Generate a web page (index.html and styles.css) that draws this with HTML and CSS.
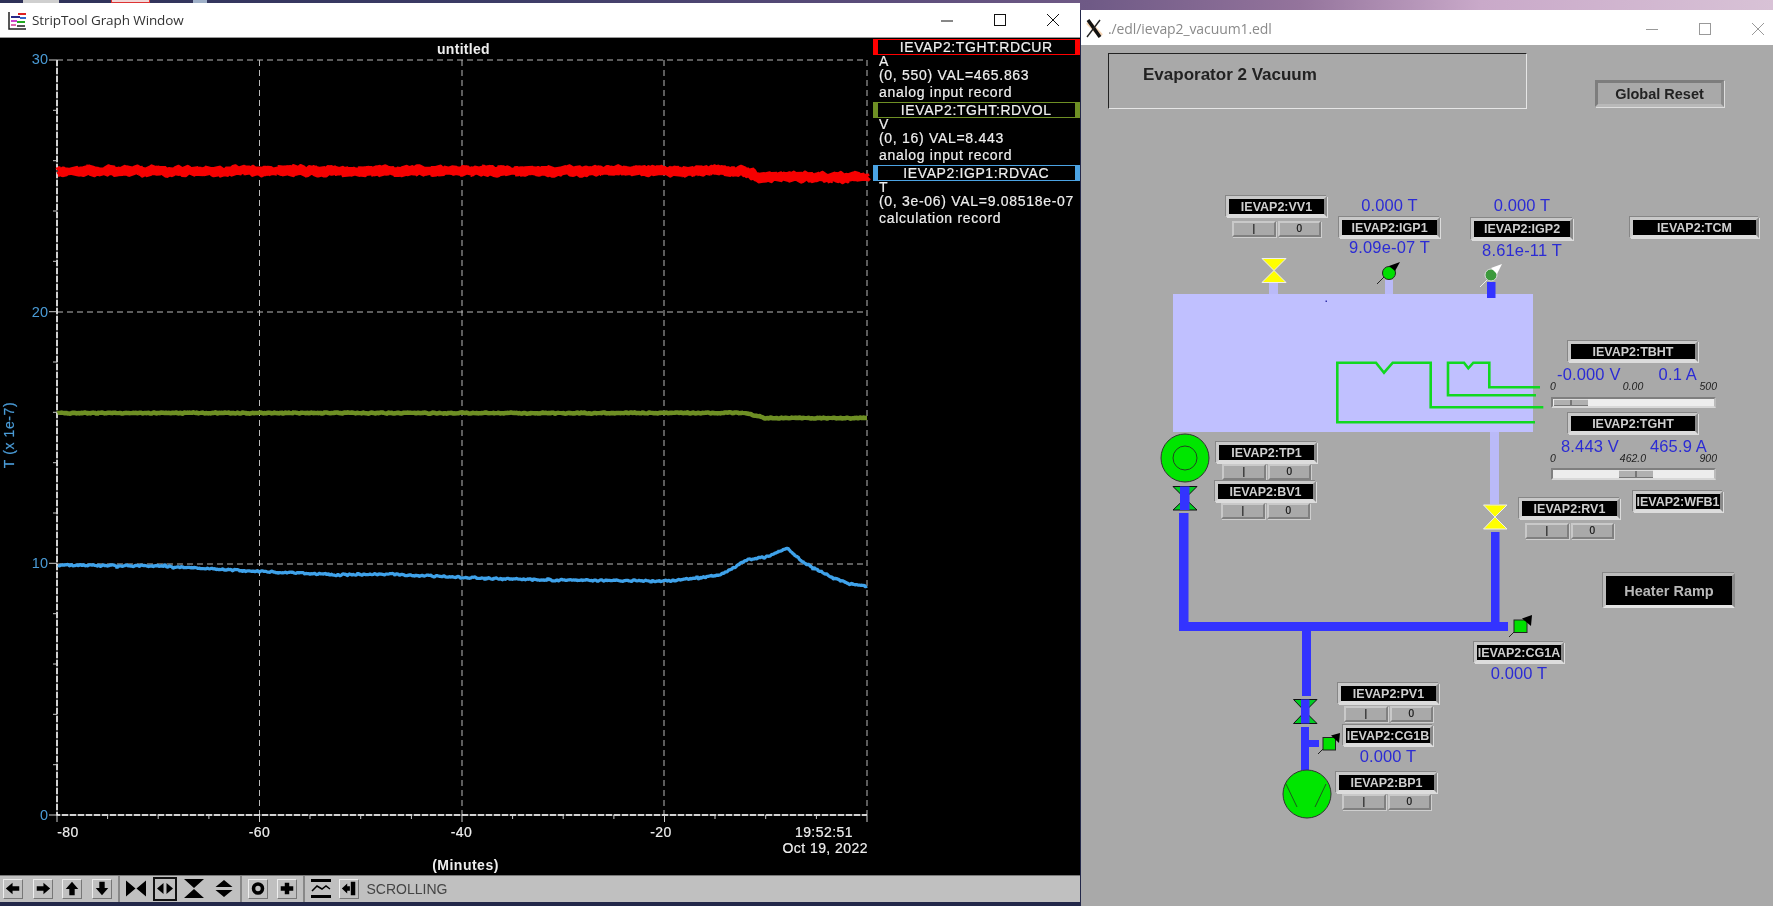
FILE: index.html
```html
<!DOCTYPE html>
<html lang="en">
<head>
<meta charset="utf-8">
<title>StripTool and EDM</title>
<link rel="stylesheet" href="styles.css">
</head>
<body>
<div class="desktop">
  <span class="chip chip-a"></span><span class="chip chip-b"></span><span class="chip chip-c"></span>

  <section class="win win-strip">
    <header class="titlebar strip-title">
      <svg class="appicon" viewBox="0 0 18 18"><rect width="18" height="18" fill="#fff"/><path d="M1 0V17H18" fill="none" stroke="#222" stroke-width="1.500"/><path d="M10 2H18" stroke="#d22" stroke-width="2"/><path d="M3 5H12" stroke="#2a2a8a" stroke-width="2"/><path d="M12 6H18" stroke="#36c" stroke-width="2"/><path d="M3 9H9" stroke="#c4c" stroke-width="2"/><path d="M9 10H17" stroke="#2a2" stroke-width="2"/><path d="M3 13H8" stroke="#d6a" stroke-width="2"/><path d="M9 14H17" stroke="#555" stroke-width="2"/></svg>
      <span class="wintext">StripTool Graph Window</span>
      <div class="controls">
        <svg viewBox="0 0 12 12"><path d="M0 7H12" stroke="#111"/></svg>
        <svg viewBox="0 0 12 12"><rect x=".5" y=".5" width="11" height="11" fill="none" stroke="#111"/></svg>
        <svg viewBox="0 0 12 12"><path d="M0 0L12 12M12 0L0 12" stroke="#111"/></svg>
      </div>
    </header>
    <div class="strip-main">
      <svg class="plot" viewBox="0 38 873 837">
        <g class="grid">
          <path d="M259.500 60V815M462 60V815M664 60V815M867 60V815"/>
          <path d="M57 60H867M57 312H867M57 564H867"/>
        </g>
        <path class="axis-base" d="M57 60V815H867"/>
        <path class="axis-dash" d="M57 60V815H867"/>
        <path class="ticks" d="M49 60H57M53 110.300H57M53 160.700H57M53 211H57M53 261.300H57M49 311.700H57M53 362H57M53 412.300H57M53 462.700H57M53 513H57M49 563.300H57M53 613.700H57M53 664H57M53 714.300H57M53 764.700H57M49 815H57"/>
        <path class="ticks" d="M57 815V822M107.600 815V819M158.200 815V819M208.900 815V819M259.500 815V822M310 815V819M360.700 815V819M411.400 815V819M462 815V822M512.600 815V819M563.200 815V819M613.900 815V819M664.500 815V822M715 815V819M765.700 815V819M816.400 815V819M867 815V822"/>
        <polyline id="trace-red" class="trace trace-red"/>
        <polyline id="trace-olive" class="trace trace-olive"/>
        <polyline id="trace-blue" class="trace trace-blue"/>
        <text class="ylab" x="48" y="64">30</text>
        <text class="ylab" x="48" y="317">20</text>
        <text class="ylab" x="48" y="568">10</text>
        <text class="ylab" x="48" y="820">0</text>
        <text class="ytitle" transform="translate(14 435) rotate(-90)">T (x 1e-7)</text>
        <text class="title-u" x="463.500" y="54">untitled</text>
        <text class="xlab" x="68" y="837">-80</text>
        <text class="xlab" x="259.500" y="837">-60</text>
        <text class="xlab" x="461.500" y="837">-40</text>
        <text class="xlab" x="661" y="837">-20</text>
        <text class="xlab xlab-end" x="853" y="837">19:52:51</text>
        <text class="xlab xlab-end" x="868" y="853">Oct 19, 2022</text>
        <text class="xtitle" x="465.500" y="870">(Minutes)</text>
      </svg>
      <aside class="legend">
        <div class="lg-name lg-red">IEVAP2:TGHT:RDCUR</div>
        <div class="lg-unit">A</div>
        <div class="lg-range">(0, 550) VAL=465.863</div>
        <div class="lg-type">analog input record</div>
        <div class="lg-name lg-olive">IEVAP2:TGHT:RDVOL</div>
        <div class="lg-unit">V</div>
        <div class="lg-range">(0, 16) VAL=8.443</div>
        <div class="lg-type">analog input record</div>
        <div class="lg-name lg-blue">IEVAP2:IGP1:RDVAC</div>
        <div class="lg-unit">T</div>
        <div class="lg-range">(0, 3e-06) VAL=9.08518e-07</div>
        <div class="lg-type">calculation record</div>
      </aside>
    </div>
    <footer class="toolbar">
      <div class="tgroup g1">
        <span class="tb"><svg viewBox="0 0 20 19"><path d="M2 9.500L9.500 3V7H17V12H9.500V16Z"/></svg></span>
        <span class="tb"><svg viewBox="0 0 20 19"><path d="M18 9.500L10.500 3V7H3V12H10.500V16Z"/></svg></span>
        <span class="tb"><svg viewBox="0 0 20 19"><path d="M10 2L17 10H13V17H7V10H3Z"/></svg></span>
        <span class="tb"><svg viewBox="0 0 20 19"><path d="M10 17L17 9H13V2H7V9H3Z"/></svg></span>
      </div>
      <i class="tsep"></i>
      <div class="tgroup g2">
        <span class="tb flat"><svg viewBox="0 0 21 19"><path d="M0 1L10 9.500L0 18ZM21 1L11 9.500L21 18Z"/></svg></span>
        <span class="tb sel"><svg viewBox="0 0 18 13"><path d="M7.500 1L1 6.500L7.500 12ZM10.500 1L17 6.500L10.500 12Z"/></svg></span>
        <span class="tb flat"><svg viewBox="0 0 20 19"><path d="M0 0H20L10 9ZM0 19H20L10 10Z"/></svg></span>
        <span class="tb flat last"><svg viewBox="0 0 19 19"><path d="M9.500 1L18 8H1ZM1 11H18L9.500 18Z"/></svg></span>
      </div>
      <i class="tsep"></i>
      <div class="tgroup g3">
        <span class="tb"><svg viewBox="0 0 20 19"><circle cx="10" cy="9.500" r="5" fill="none" stroke="#000" stroke-width="4"/></svg></span>
        <span class="tb"><svg viewBox="0 0 20 19"><path d="M7.500 3H12.500V7H17V12H12.500V16H7.500V12H3V7H7.500Z"/></svg></span>
      </div>
      <i class="tsep"></i>
      <div class="tgroup g4">
        <span class="tb flat"><svg viewBox="0 0 20 19"><path d="M0 0H20V3H0ZM0 16H20V19H0Z"/><path d="M1 12L6 7L11 10L15 7L19 10" fill="none" stroke="#000" stroke-width="1.500"/></svg></span>
        <span class="tb"><svg viewBox="0 0 20 19"><path d="M2 9.500L8 4V7H11V12H8V15ZM12 2H17V17H12Z"/></svg></span>
      </div>
      <span class="tstatus">SCROLLING</span>
    </footer>
  </section>

  <section class="win win-edm">
    <header class="titlebar edm-title">
      <svg class="xicon" viewBox="0 0 18 19"><path d="M3 3L16 17" stroke="#e9a15a" stroke-width="5" opacity=".45"/><path d="M3 1L15 18" stroke="#111" stroke-width="3.400"/><path d="M15 1L2 18" stroke="#222" stroke-width="1.400"/></svg>
      <span class="wintext edm-text">./edl/ievap2_vacuum1.edl</span>
      <div class="controls edm-controls">
        <svg viewBox="0 0 12 12"><path d="M0 6.500H12" stroke="#999"/></svg>
        <svg viewBox="0 0 12 12"><rect x=".5" y=".5" width="11" height="11" fill="none" stroke="#999"/></svg>
        <svg viewBox="0 0 12 12"><path d="M0 0L12 12M12 0L0 12" stroke="#999"/></svg>
      </div>
    </header>
    <div class="panel">
      <svg class="schematic" viewBox="1081 45 692 861">
        <rect class="vessel" x="1173" y="294" width="360" height="138"/>
        <rect class="dot" x="1325.500" y="300.500" width="1.500" height="1.500"/>
        <g class="lav">
          <rect x="1269" y="283" width="9" height="11"/>
          <rect x="1385" y="280" width="8" height="14"/>
          <rect x="1490" y="432" width="9" height="72"/>
        </g>
        <g class="blue">
          <rect x="1487" y="282" width="8.500" height="16"/>
          <rect x="1179" y="513" width="9.500" height="118"/>
          <rect x="1179" y="622" width="329" height="9"/>
          <rect x="1491" y="532" width="8.500" height="90"/>
          <rect x="1302" y="631" width="9" height="65"/>
          <rect x="1301" y="727" width="8" height="43"/>
          <rect x="1301" y="740" width="18" height="7"/>
        </g>
        <path class="heater" d="M1535 422.300H1337.300V362.700H1376L1384 372.700L1392.700 362.700H1430.700V407.300H1543.300"/>
        <path class="heater" d="M1536 395.300H1448V362.700H1464L1468.300 368.300L1473.300 362.700H1489.300V387.300H1540"/>

        <path class="valve-y" d="M1262 258.500H1286L1274 270.500L1286 282.500H1262L1274 270.500Z"/>
        <path class="valve-y" d="M1483.500 505H1507L1495 517L1507 529H1483.500L1495 517Z"/>
        <path class="valve-g" d="M1173 486.500H1197L1185 498.500L1197 510H1173L1185 498.500Z"/>
        <rect class="blue-fill" x="1180" y="486.500" width="9.500" height="23.500"/>
        <path class="valve-g" d="M1293.500 699.500H1317L1305 711.500L1317 723.500H1293.500L1305 711.500Z"/>
        <rect class="blue-fill" x="1301" y="699.500" width="8.500" height="24"/>

        <path class="g-line" d="M1377 284L1385 276"/>
        <circle class="g-on" cx="1389" cy="273" r="6.500"/>
        <path class="g-arrow" d="M1389 266L1400 262L1395 271Z"/>
        <path class="g-line-w" d="M1480 287L1487 280"/>
        <circle class="g-dim" cx="1491" cy="275" r="6"/>
        <path class="g-arrow-w" d="M1491 268L1502 264L1497 274Z"/>

        <path class="g-line" d="M1509 637L1515 631"/>
        <rect class="g-on" x="1514" y="620" width="13" height="12.500"/>
        <path class="g-arrow" d="M1522 618.500L1532 615L1531 626Z"/>
        <path class="g-line" d="M1318 754L1324 748"/>
        <rect class="g-on" x="1323" y="737.500" width="12.500" height="12.500"/>
        <path class="g-arrow" d="M1331 735.500L1340 733L1339 743Z"/>

        <circle class="pump" cx="1185" cy="458" r="24"/>
        <circle class="pump-in" cx="1185" cy="458" r="12"/>
        <circle class="pump" cx="1307" cy="794" r="24"/>
        <path class="pump-v" d="M1286 784L1297 807M1326 784L1315 807"/>
      </svg>

      <div class="frame n-frame"><span class="frame-text">Evaporator 2 Vacuum</span></div>
      <div class="relbtn n-reset">Global Reset</div>
      <div class="relbtn n-ramp">Heater Ramp</div>

      <div class="node n-vv1"><div class="pv">IEVAP2:VV1</div><div class="btns"><span class="btn">|</span><span class="btn">0</span></div></div>
      <div class="node n-tp1"><div class="pv">IEVAP2:TP1</div><div class="btns"><span class="btn">|</span><span class="btn">0</span></div></div>
      <div class="node n-bv1"><div class="pv">IEVAP2:BV1</div><div class="btns"><span class="btn">|</span><span class="btn">0</span></div></div>
      <div class="node n-rv1"><div class="pv">IEVAP2:RV1</div><div class="btns"><span class="btn">|</span><span class="btn">0</span></div></div>
      <div class="node n-pv1"><div class="pv">IEVAP2:PV1</div><div class="btns"><span class="btn">|</span><span class="btn">0</span></div></div>
      <div class="node n-bp1"><div class="pv">IEVAP2:BP1</div><div class="btns"><span class="btn">|</span><span class="btn">0</span></div></div>

      <div class="node center n-igp1"><div class="val">0.000 T</div><div class="pv">IEVAP2:IGP1</div><div class="val">9.09e-07 T</div></div>
      <div class="node center n-igp2"><div class="val">0.000 T</div><div class="pv">IEVAP2:IGP2</div><div class="val">8.61e-11 T</div></div>
      <div class="node center n-cg1a"><div class="pv">IEVAP2:CG1A</div><div class="val">0.000 T</div></div>
      <div class="node center n-cg1b"><div class="pv">IEVAP2:CG1B</div><div class="val">0.000 T</div></div>
      <div class="node n-tcm"><div class="pv">IEVAP2:TCM</div></div>
      <div class="node n-wfb1"><div class="pv">IEVAP2:WFB1</div></div>

      <div class="node heat n-tbht">
        <div class="pv">IEVAP2:TBHT</div>
        <div class="vals"><span class="val v-tb1">-0.000 V</span><span class="val v-tb2">0.1 A</span></div>
        <div class="scale"><span>0</span><span class="s-tb">0.00</span><span class="s-end">500</span></div>
        <div class="slider"><i class="thumb"></i></div>
      </div>
      <div class="node heat n-tght">
        <div class="pv">IEVAP2:TGHT</div>
        <div class="vals"><span class="val v-tg1">8.443 V</span><span class="val v-tg2">465.9 A</span></div>
        <div class="scale"><span>0</span><span class="s-tg">462.0</span><span class="s-end">900</span></div>
        <div class="slider"><i class="thumb"></i></div>
      </div>
    </div>
  </section>
</div>
<script src="strip.js"></script>
</body>
</html>
```
FILE: styles.css
```css
* { box-sizing: border-box; }
html, body { margin: 0; padding: 0; width: 1773px; height: 906px; overflow: hidden; }
body { font-family: "Liberation Sans", Arial, sans-serif; background: #23284a; }

.desktop {
  position: relative; width: 1773px; height: 906px; overflow: hidden; filter: blur(.5px);
  background:
    linear-gradient(90deg, #2e3158 0, #3c3c66 500px, #5d4e7c 900px, #6f5a86 1090px, #94749c 1300px, #c9a9c9 1480px, #d8c2d6 1773px) top / 100% 10px no-repeat,
    #23284a;
}
.chip { position: absolute; top: 0; height: 3px; }
.chip-a { left: 23px; width: 36px; background: #cfcfcf; }
.chip-b { left: 111px; width: 39px; background: #f0d8d8; border: 1px solid #d33; border-top: 0; }
.chip-c { left: 193px; width: 14px; background: #9fb0c8; }

.win { position: absolute; display: flex; flex-direction: column; }
.win-strip { left: 0; top: 3px; width: 1079.500px; height: 899px; }
.win-edm { left: 1081px; top: 10px; width: 692px; height: 896px; }

.titlebar { display: flex; align-items: center; background: #fff; flex: none; position: relative; }
.strip-title { height: 35px; padding-left: 8px; border-bottom: 1px solid #999; }
.edm-title { height: 35px; padding-left: 4px; }
.appicon { width: 18px; height: 18px; margin-right: 6px; margin-top: 1px; }
.xicon { width: 18px; height: 19px; margin-right: 5px; margin-top: 2px; }
.wintext { font-family: "Open Sans", sans-serif; font-size: 13.500px; color: #333; letter-spacing: -.1px; }
.edm-text { color: #8a8a8a; font-size: 14px; margin-top: 2px; letter-spacing: -.1px; }
.controls { margin-left: auto; display: flex; }
.controls svg { width: 12px; height: 12px; }
.strip-title .controls { padding-right: 21px; gap: 41px; margin-top: -1px; }
.edm-controls { padding-right: 9px; gap: 41px; margin-top: 2px; }

.strip-main { flex: 1; display: flex; background: #000; min-height: 0; }
.plot { width: 873px; height: 837px; flex: none; display: block; }
.grid path { fill: none; stroke: #b8b8b8; stroke-width: 1; stroke-dasharray: 6 4; }
.axis-base { fill: none; stroke: #8a8a8a; stroke-width: 1; }
.axis-dash { fill: none; stroke: #fff; stroke-width: 1.500; stroke-dasharray: 6 2; }
.ticks { fill: none; stroke: #ccc; stroke-width: 1; }
.trace { fill: none; stroke-linejoin: bevel; }
.trace-red { stroke: #f60000; stroke-width: 10.500; }
.trace-olive { stroke: #6e8f24; stroke-width: 4.500; }
.trace-blue { stroke: #3fa2ea; stroke-width: 3.200; }
.ylab, .ytitle { font-size: 14.500px; fill: #4a9bd6; text-anchor: end; font-family: "Liberation Sans", sans-serif; }
.ytitle { text-anchor: middle; letter-spacing: .6px; font-size: 14px; stroke: #4a9bd6; stroke-width: .2px; }
.xlab, .xtitle, .title-u { font-family: "Liberation Sans", sans-serif; font-size: 14px; fill: #eee; text-anchor: middle; letter-spacing: .45px; stroke: #eee; stroke-width: .2px; }
.xlab-end { text-anchor: end; }
.title-u { font-weight: 700; letter-spacing: .3px; stroke: none; }
.xtitle { font-weight: 700; letter-spacing: .5px; stroke: none; }

.legend { flex: 1; color: #eee; font-size: 14px; letter-spacing: .7px; -webkit-text-stroke: .2px #eee; padding-top: 1px; min-width: 0; }
.lg-name { height: 16px; line-height: 14px; text-align: center; white-space: nowrap; letter-spacing: .6px; border-style: solid; border-width: 1px 5px; }
.lg-red { border-color: #f00; }
.lg-olive { border-color: #6e8f24; }
.lg-blue { border-color: #4ba3e3; }
.lg-unit { padding-left: 6px; line-height: 13px; }
.lg-range { padding-left: 6px; line-height: 17px; margin-top: -1.500px; }
.lg-type { padding-left: 6px; line-height: 17px; margin-bottom: 1.500px; }

.toolbar { flex: none; height: 27px; background: #c0c0c0; border-top: 1px solid #777; display: flex; align-items: center; padding: 0 0 1px 3px; }
.tgroup { display: flex; align-items: center; }
.g1 { gap: 9.500px; }
.g2 { gap: 7px; }
.g3 { gap: 9px; }
.g4 { gap: 8px; }
.tb { width: 20px; height: 20px; display: flex; align-items: center; justify-content: center; border: 1.500px solid; border-color: #eee #777 #777 #eee; background: #c0c0c0; flex: none; }
.tb svg { width: 18px; height: 17px; display: block; flex: none; }
.tb.flat { border-color: transparent; }
.tb.flat svg { width: 20px; height: 19px; }
.tb.sel { width: 24px; height: 24px; border: 2px solid #111; }
.tb.sel svg { width: 18px; height: 13px; }
.tb.last { margin-left: 3px; }
.tsep { width: 2px; height: 26px; background: #888; margin: 0 6px 0 6px; flex: none; }
.tstatus { margin-left: 8px; font-size: 14px; color: #444; }

.panel { flex: 1; position: relative; background: #a9a9a9; overflow: hidden; }
.schematic { position: absolute; left: 0; top: 0; width: 692px; height: 861px; }
.vessel { fill: #c0c0ff; }
.dot { fill: #33a; }
.lav rect { fill: #babaf8; }
.blue rect, .blue-fill { fill: #3333ff; }
.heater { fill: none; stroke: #10d820; stroke-width: 2.600; }
.valve-y { fill: #ffff00; stroke: #eee; stroke-width: 1; }
.valve-g { fill: #00cc22; stroke: #111; stroke-width: 1; }
.g-line { stroke: #222; stroke-width: 1; }
.g-line-w { stroke: #eee; stroke-width: 1; }
.g-on { fill: #00e000; stroke: #222; stroke-width: 1; }
.g-dim { fill: #3b993b; stroke: #ddd; stroke-width: 1; }
.g-arrow { fill: #000; }
.g-arrow-w { fill: #fff; }
.pump { fill: #00e600; stroke: #333; stroke-width: 1; }
.pump-in { fill: none; stroke: #224422; stroke-width: 1; }
.pump-v { fill: none; stroke: #1d5a1d; stroke-width: 1; }

.frame { position: absolute; border: 1.500px solid; border-color: #222 #e6e6e6 #e6e6e6 #222; padding: 11px 0 0 34px; }
.frame-text { font-size: 17px; font-weight: 700; color: #222; line-height: 20px; display: block; }
.n-frame { left: 27px; top: 8px; width: 419px; height: 56px; }

.relbtn { position: absolute; display: flex; align-items: center; justify-content: center; font-weight: 700; font-size: 14.500px; border: 3px solid; }
.n-reset { left: 514px; top: 35px; width: 129px; height: 27px; color: #222; background: #a9a9a9; border-color: #7d7d7d #8c8c8c #b9b9b9 #7d7d7d; box-shadow: 1px 1px 0 #ddd; }
.n-ramp { left: 522px; top: 528px; width: 132px; height: 35px; color: #b8b8b8; background: #000; border-color: #bcbcbc #8a8a8a #e4e4e4 #bcbcbc; box-shadow: -1px -1px 0 #888; }

.node { position: absolute; display: flex; flex-direction: column; }
.node.center { align-items: center; }
.pv { height: 21px; width: 101px; display: flex; align-items: center; justify-content: center; background: #000; color: #cfcfcf; font-size: 12.500px; font-weight: 700; white-space: nowrap; overflow: hidden; border: 3px solid; border-color: #c9c9c9 #8a8a8a #dcdcdc #c9c9c9; box-shadow: -1px -1px 0 #868686, 1px 1px 0 #dcdcdc; flex: none; }
.btns { display: flex; gap: 2px; padding-left: 6px; }
.btn { width: 43.500px; height: 16px; display: flex; align-items: center; justify-content: center; font-size: 10px; color: #111; line-height: 1; -webkit-text-stroke: .2px #111; border: 2px solid; border-color: #c9c9c9 #808080 #808080 #c9c9c9; box-shadow: 1px 1px 0 #cfcfcf; background: #a9a9a9; }
.val { font-size: 16.500px; line-height: 18px; letter-spacing: .15px; color: #2b2bd4; white-space: nowrap; }

.n-vv1 { left: 145px; top: 151px; gap: 4px; }
.n-tp1 { left: 135px; top: 397px; gap: 1px; }
.n-bv1 { left: 134px; top: 436px; gap: 1px; }
.n-rv1 { left: 438px; top: 453px; gap: 4px; }
.n-pv1 { left: 257px; top: 638px; gap: 2px; }
.n-bp1 { left: 255px; top: 727px; gap: 1px; }
.n-igp1 { left: 258px; top: 151px; gap: 0; }
.n-igp1 .pv { margin-top: 3px; }
.n-igp2 { left: 390px; top: 151px; }
.n-igp2 .pv { margin-top: 4px; height: 22px; width: 102px; }
.n-igp2 .pv + .val { margin-top: 1px; }
.n-cg1a { left: 393px; top: 597px; width: 90px; }
.n-cg1b { left: 262px; top: 680px; width: 90px; }
.n-cg1a .pv, .n-cg1b .pv { width: 90px; }
.n-cg1a .val, .n-cg1b .val { margin-top: 1px; }
.n-tcm { left: 549px; top: 172px; }
.n-tcm .pv { width: 129px; }
.n-wfb1 { left: 552px; top: 446px; }
.n-wfb1 .pv { width: 90px; }

.heat { width: 167px; }
.heat .pv { width: 130px; margin-left: 18px; }
.n-tbht { left: 469px; top: 296px; }
.n-tght { left: 469px; top: 368px; }
.vals { display: flex; height: 18px; margin-top: 3px; }
.v-tb1 { margin-left: 7px; }
.v-tb2 { margin-left: 38px; }
.v-tg1 { margin-left: 11px; }
.v-tg2 { margin-left: 31px; }
.scale { display: flex; height: 10px; margin-top: -2px; font-size: 10.500px; line-height: 10px; font-style: italic; color: #222; }
.s-tb { margin-left: 67px; }
.s-tg { margin-left: 64px; }
.s-end { margin-left: auto; }
.slider { height: 12px; margin-top: 5px; width: 165px; margin-left: 1px; background: #ededed; border: 2px solid; border-color: #7f7f7f #bbb #d8d8d8 #7f7f7f; position: relative; }
.n-tbht .slider { margin-top: 6px; height: 11px; }
.thumb { position: absolute; top: 0; bottom: 0; width: 34px; background: linear-gradient(90deg, #b0b0b0 0 48%, #777 48% 52%, #b0b0b0 52%); border-top: 1px solid #ddd; border-bottom: 1px solid #777; }
.n-tbht .thumb { left: 1px; }
.n-tght .thumb { left: 66px; }
```
FILE: strip.js
```js
// Deterministic noisy traces for the strip chart.
(function () {
  var seed = 12345;
  function rnd() {
    seed = (seed * 1103515245 + 12345) & 0x7fffffff;
    return seed / 0x7fffffff;
  }
  function interp(pts, x) {
    for (var i = 1; i < pts.length; i++) {
      if (x <= pts[i][0]) {
        var a = pts[i - 1], b = pts[i];
        return a[1] + (b[1] - a[1]) * (x - a[0]) / (b[0] - a[0]);
      }
    }
    return pts[pts.length - 1][1];
  }
  function draw(id, pts, jitter, spike, step) {
    var out = [];
    for (var x = 58; x <= 867; x += step) {
      var y = interp(pts, x) + (rnd() - 0.5) * jitter;
      if (rnd() < 0.06) y += (rnd() - 0.5) * spike;
      out.push(x.toFixed(1) + "," + y.toFixed(1));
    }
    document.getElementById(id).setAttribute("points", out.join(" "));
  }
  draw("trace-red", [[57, 171], [745, 171], [758, 177], [867, 177.5]], 3.5, 6, 1);
  draw("trace-olive", [[57, 413], [745, 413], [765, 418], [867, 418]], 1.4, 2, 1);
  draw("trace-blue", [[57, 565], [158, 566], [250, 571], [340, 575], [385, 574], [452, 577], [543, 580], [667, 581], [706, 577], [720, 575], [747, 560], [770, 556], [787, 548], [803, 562], [833, 578], [850, 584], [867, 586]], 1.8, 3.5, 1);
})();
```
